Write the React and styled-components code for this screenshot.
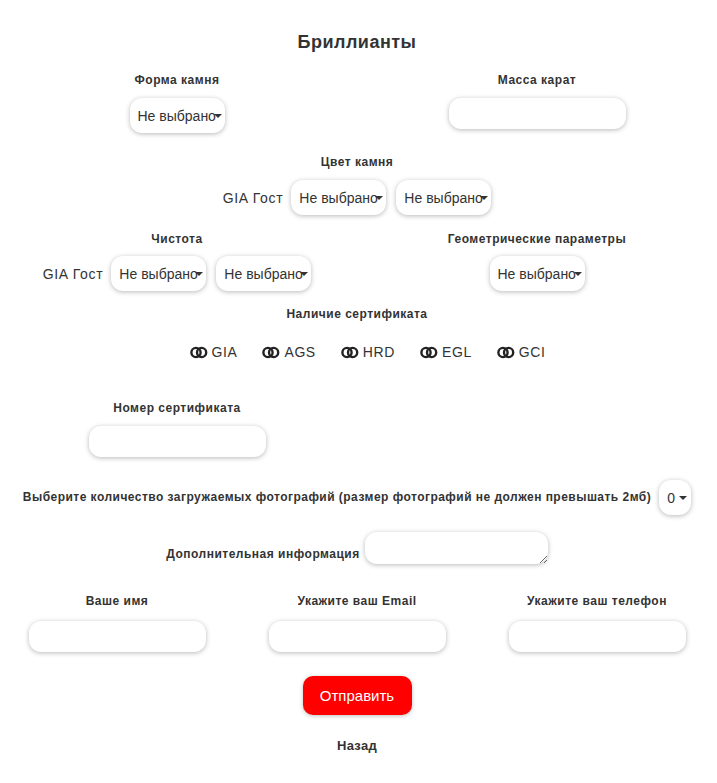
import React from 'react';
import styled, { createGlobalStyle } from 'styled-components';

const Global = createGlobalStyle`
	body {
		margin: 0;
		background: #fff;
		font-family: "Liberation Sans", Arial, sans-serif;
		color: #333;
	}
`;

const Page = styled.form`
	width: 720px;
	margin-left: -3px;
	padding: 32px 0 20px;
	display: flex;
	flex-direction: column;
	align-items: center;
`;

const Title = styled.h2`
	margin: 0;
	font-size: 18px;
	line-height: 21px;
	font-weight: bold;
	letter-spacing: 0.5px;
	color: #333;
`;

const Label = styled.div`
	font-size: 12px;
	line-height: 15px;
	font-weight: bold;
	letter-spacing: ${({ $ls }) => $ls ?? 0.5}px;
	color: #333;
	white-space: nowrap;
`;

const Columns = styled.div`
	width: 100%;
	margin-top: ${({ $mt }) => $mt}px;
	display: grid;
	grid-template-columns: repeat(${({ $cols }) => $cols || 2}, 1fr);
`;

const Field = styled.div`
	margin-top: ${({ $mt }) => $mt || 0}px;
	display: flex;
	flex-direction: column;
	align-items: center;
	gap: ${({ $gap }) => $gap ?? 10}px;
`;

const Inline = styled.div`
	display: flex;
	align-items: center;
	gap: 10px;
`;

const Prefix = styled.span`
	font-size: 14px;
	letter-spacing: 0.7px;
	margin-right: -2px;
	color: #333;
`;

const SelectWrap = styled.div`
	position: relative;
	width: ${({ $w }) => $w || 95}px;
	height: 35px;
	border-radius: 12px;
	background: #fff;
	box-shadow: 0 1px 5px rgba(0, 0, 0, 0.28);
	overflow: hidden;
`;

const NativeSelect = styled.select`
	appearance: none;
	width: 100%;
	height: 100%;
	border: none;
	background: transparent;
	padding: 0 0 0 8px;
	font-family: "Liberation Sans", Arial, sans-serif;
	font-size: 14px;
	color: #333;
	outline: none;
`;

const Arrow = styled.span`
	position: absolute;
	right: ${({ $r }) => $r ?? 3}px;
	top: 16px;
	width: 0;
	height: 0;
	border-left: 4px solid transparent;
	border-right: 4px solid transparent;
	border-top: 4px solid #333;
	pointer-events: none;
`;

const TextInput = styled.input`
	width: 177px;
	height: 31px;
	box-sizing: border-box;
	border: none;
	border-radius: 12px;
	background: #fff;
	box-shadow: 0 1px 5px rgba(0, 0, 0, 0.28);
	outline: none;
`;

const Area = styled.textarea`
	width: 183px;
	height: 32px;
	box-sizing: border-box;
	border: none;
	border-radius: 12px;
	background: #fff;
	box-shadow: 0 1px 5px rgba(0, 0, 0, 0.28);
	outline: none;
	display: block;
`;

const Radios = styled.div`
	margin-top: 20px;
	padding-left: 21px;
	display: flex;
	gap: 25px;
`;

const RadioItem = styled.label`
	display: flex;
	align-items: center;
	gap: 4px;
	font-size: 14px;
	letter-spacing: 0.6px;
	color: #333;
	height: 20px;
`;

const Row = styled.div`
	margin-top: ${({ $mt }) => $mt}px;
	display: flex;
	align-items: ${({ $align }) => $align || 'center'};
	gap: ${({ $gap }) => $gap || 8}px;
`;

const AreaLabel = styled(Label)`
	margin-bottom: 2px;
`;

const Submit = styled.button`
	margin-top: 24px;
	width: 109px;
	height: 39px;
	border: none;
	border-radius: 10px;
	background: #ff0000;
	color: #fff;
	font-family: "Liberation Sans", Arial, sans-serif;
	font-size: 15px;
	box-shadow: 0 1px 4px rgba(0, 0, 0, 0.25);
`;

const Back = styled.div`
	margin-top: 23px;
	font-size: 13px;
	font-weight: bold;
	letter-spacing: 0.3px;
	color: #333;
`;

function Select({ value = 'Не выбрано', width, arrowRight }) {
	return (
		<SelectWrap $w={width}>
			<NativeSelect defaultValue={value}>
				<option>{value}</option>
			</NativeSelect>
			<Arrow $r={arrowRight} />
		</SelectWrap>
	);
}

function RingIcon() {
	return (
		<svg width="18" height="13" viewBox="0 0 18 13">
			<circle cx="6" cy="6.5" r="4.6" fill="none" stroke="#222" strokeWidth="2.4" />
			<circle cx="11.6" cy="6.5" r="4.6" fill="none" stroke="#222" strokeWidth="2.4" />
		</svg>
	);
}

const certs = ['GIA', 'AGS', 'HRD', 'EGL', 'GCI'];

export default function App() {
	return (
		<>
			<Global />
			<Page onSubmit={(e) => e.preventDefault()}>
				<Title>Бриллианты</Title>

				<Columns $mt={20}>
					<Field>
						<Label>Форма камня</Label>
						<Select />
					</Field>
					<Field>
						<Label>Масса карат</Label>
						<TextInput />
					</Field>
				</Columns>

				<Field $mt={22}>
					<Label>Цвет камня</Label>
					<Inline>
						<Prefix>GIA Гост</Prefix>
						<Select />
						<Select />
					</Inline>
				</Field>

				<Columns $mt={17}>
					<Field $gap={9}>
						<Label>Чистота</Label>
						<Inline>
							<Prefix>GIA Гост</Prefix>
							<Select />
							<Select />
						</Inline>
					</Field>
					<Field $gap={9}>
						<Label>Геометрические параметры</Label>
						<Select />
					</Field>
				</Columns>

				<Field $mt={16} $gap={0}>
					<Label>Наличие сертификата</Label>
				</Field>
				<Radios>
					{certs.map((c) => (
						<RadioItem key={c}>
							<RingIcon />
							{c}
						</RadioItem>
					))}
				</Radios>

				<Columns $mt={39}>
					<Field>
						<Label>Номер сертификата</Label>
						<TextInput />
					</Field>
				</Columns>

				<Row $mt={23}>
					<Label $ls={0.47}>
						Выберите количество загружаемых фотографий (размер фотографий не должен превышать 2мб)
					</Label>
					<Select value="0" width={32} arrowRight={4} />
				</Row>

				<Row $mt={17} $align="flex-end" $gap={5}>
					<AreaLabel>Дополнительная информация</AreaLabel>
					<Area />
				</Row>

				<Columns $mt={30} $cols={3}>
					<Field $gap={12}>
						<Label>Ваше имя</Label>
						<TextInput />
					</Field>
					<Field $gap={12}>
						<Label>Укажите ваш Email</Label>
						<TextInput />
					</Field>
					<Field $gap={12}>
						<Label>Укажите ваш телефон</Label>
						<TextInput />
					</Field>
				</Columns>

				<Submit type="submit">Отправить</Submit>
				<Back>Назад</Back>
			</Page>
		</>
	);
}
